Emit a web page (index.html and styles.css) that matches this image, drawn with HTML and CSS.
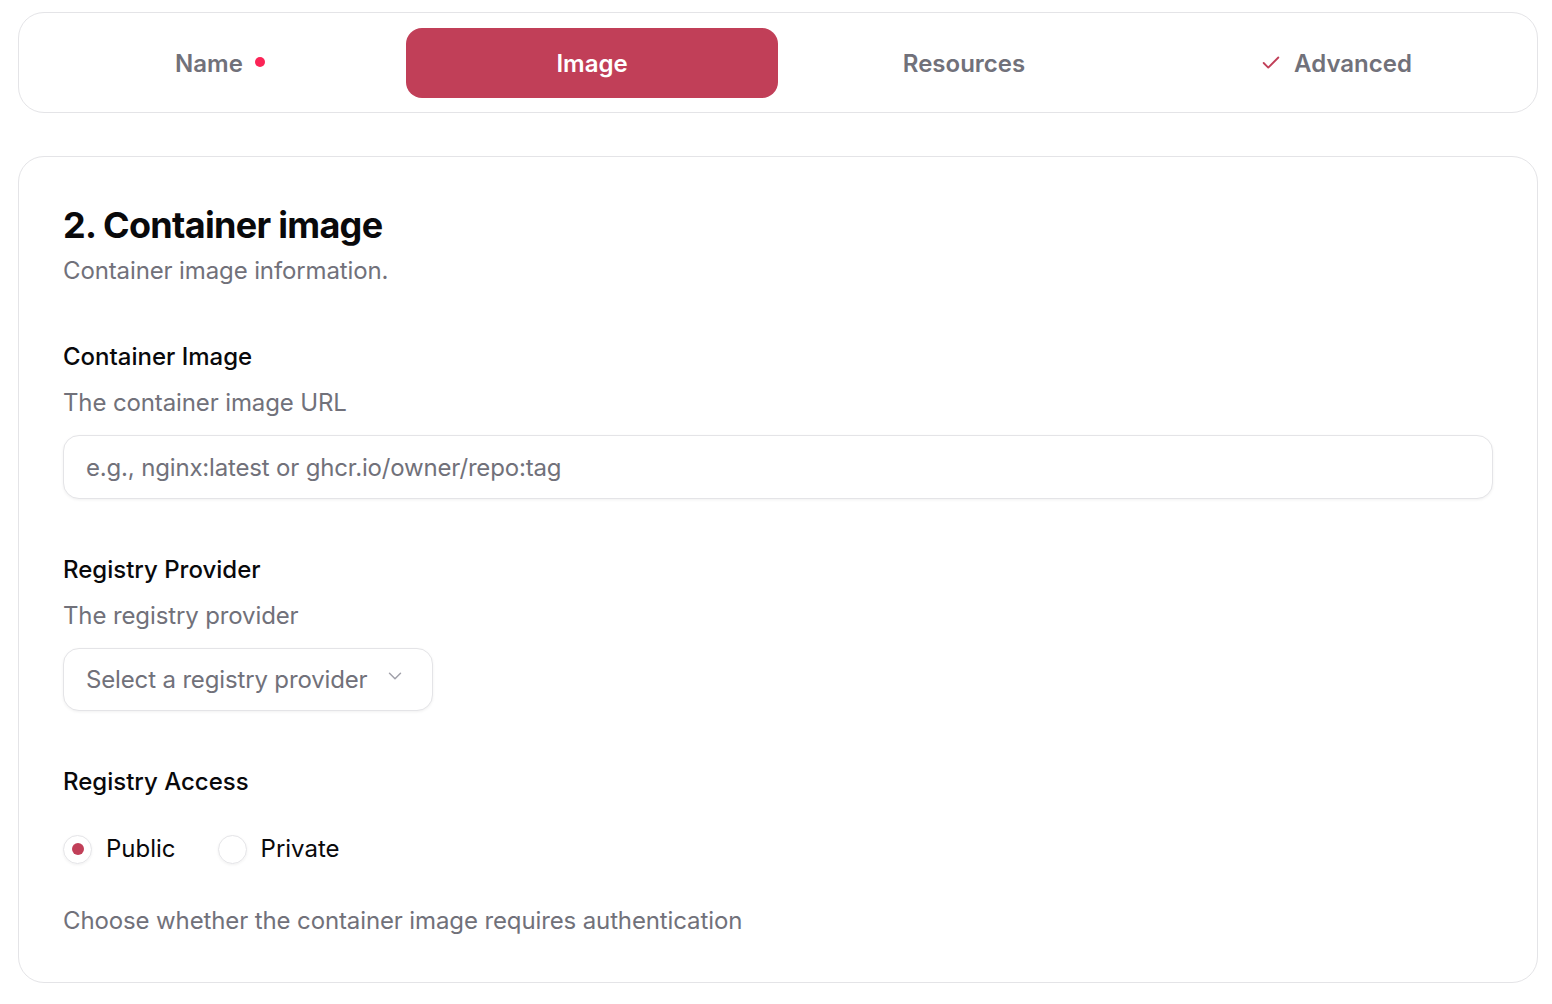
FILE: index.html
```html
<!DOCTYPE html>
<html lang="en">
<head>
    <meta charset="UTF-8">
    <meta name="viewport" content="width=device-width, initial-scale=1.0">
    <title>New Container</title>
    <link rel="stylesheet" href="styles.css">
</head>
<body>
    <div class="page">
        <nav class="steps">
            <button class="step">Name <span class="dot"></span></button>
            <button class="step active">Image</button>
            <button class="step">Resources</button>
            <button class="step">
                <svg class="check" width="22" height="22" viewBox="0 0 24 24" fill="none" stroke="currentColor" stroke-width="2" stroke-linecap="round" stroke-linejoin="round"><path d="M20 6 9 17l-5-5"/></svg>
                Advanced
            </button>
        </nav>

        <section class="card">
            <div class="card-head">
                <h2>2. Container image</h2>
                <p class="muted">Container image information.</p>
            </div>

            <div class="field">
                <label class="label" for="image">Container Image</label>
                <p class="muted">The container image URL</p>
                <input id="image" class="text-input" placeholder="e.g., nginx:latest or ghcr.io/owner/repo:tag">
            </div>

            <div class="field">
                <div class="label">Registry Provider</div>
                <p class="muted">The registry provider</p>
                <button class="select">
                    <span>Select a registry provider</span>
                    <svg width="22" height="22" viewBox="0 0 24 24" fill="none" stroke="currentColor" stroke-width="1.6" stroke-linecap="round" stroke-linejoin="round"><path d="m6 9 6 6 6-6"/></svg>
                </button>
            </div>

            <div class="field">
                <div class="label">Registry Access</div>
                <div class="radios">
                    <label class="radio"><span class="circle checked"></span>Public</label>
                    <label class="radio"><span class="circle"></span>Private</label>
                </div>
                <p class="muted note">Choose whether the container image requires authentication</p>
            </div>
        </section>
    </div>
</body>
</html>
```

FILE: styles.css
```css
body {
    margin: 0;
    background: #ffffff;
    font-family: Inter, "Noto Sans", sans-serif;
    color: #09090b;
}

.page {
    padding: 12px 14px 0 18px;
    display: flex;
    flex-direction: column;
    gap: 43px;
}

.steps {
    display: grid;
    grid-template-columns: repeat(4, 1fr);
    padding: 15px 15px 14px;
    border: 1px solid #e4e4e7;
    border-radius: 26px;
}

.step {
    height: 70px;
    border: none;
    background: transparent;
    border-radius: 16px;
    font-family: inherit;
    font-size: 24px;
    font-weight: 600;
    color: #71717a;
    display: flex;
    align-items: center;
    justify-content: center;
    gap: 12px;
}

.step.active {
    background: #c13f58;
    color: #ffffff;
}

.dot {
    width: 10px;
    height: 10px;
    border-radius: 50%;
    background: #fb2456;
    margin-top: -2px;
}

.check {
    color: #c13f58;
}

.card {
    border: 1px solid #e4e4e7;
    border-radius: 26px;
    padding: 48px 44px 43px;
    display: flex;
    flex-direction: column;
    gap: 50px;
}

h2 {
    margin: 0;
    font-size: 36px;
    line-height: 40px;
    font-weight: 700;
    letter-spacing: -0.7px;
}

.muted {
    margin: 0;
    font-size: 24px;
    line-height: 36px;
    color: #71717a;
    letter-spacing: -0.12px;
}

.card-head .muted {
    margin-top: 8px;
}

.field {
    display: flex;
    flex-direction: column;
    align-items: flex-start;
}

.field + .field {
    margin-top: 3px;
}

.label {
    font-size: 24px;
    line-height: 36px;
    font-weight: 500;
    margin-bottom: 10px;
}

.field .muted {
    margin-bottom: 14px;
}

.text-input {
    box-sizing: border-box;
    width: 100%;
    height: 64px;
    padding: 0 22px;
    border: 1px solid #e4e4e7;
    border-radius: 16px;
    box-shadow: 0 1px 3px rgba(0, 0, 0, 0.06);
    font-family: inherit;
    font-size: 24px;
    letter-spacing: -0.17px;
    color: #09090b;
    outline: none;
}

.text-input::placeholder {
    color: #71717a;
}

.select {
    box-sizing: border-box;
    width: 370px;
    height: 63px;
    padding: 0 26px 0 22px;
    border: 1px solid #e4e4e7;
    border-radius: 16px;
    background: #ffffff;
    box-shadow: 0 1px 3px rgba(0, 0, 0, 0.06);
    font-family: inherit;
    font-size: 24px;
    letter-spacing: -0.15px;
    color: #71717a;
    display: flex;
    align-items: center;
    justify-content: space-between;
}

.select svg {
    color: #a1a1aa;
    margin-top: -8px;
}

.radios {
    display: flex;
    gap: 42px;
    margin-top: 21px;
    margin-bottom: 36px;
}

.radio {
    display: flex;
    align-items: center;
    gap: 14px;
    font-size: 24px;
    line-height: 36px;
}

.circle {
    box-sizing: border-box;
    width: 29px;
    height: 29px;
    border-radius: 50%;
    border: 1px solid #e4e4e7;
    box-shadow: 0 1px 3px rgba(0, 0, 0, 0.06);
    display: flex;
    align-items: center;
    justify-content: center;
}

.circle.checked::after {
    content: "";
    width: 12px;
    height: 12px;
    border-radius: 50%;
    background: #c13f58;
}

.field .note {
    margin-bottom: 0;
}
```
